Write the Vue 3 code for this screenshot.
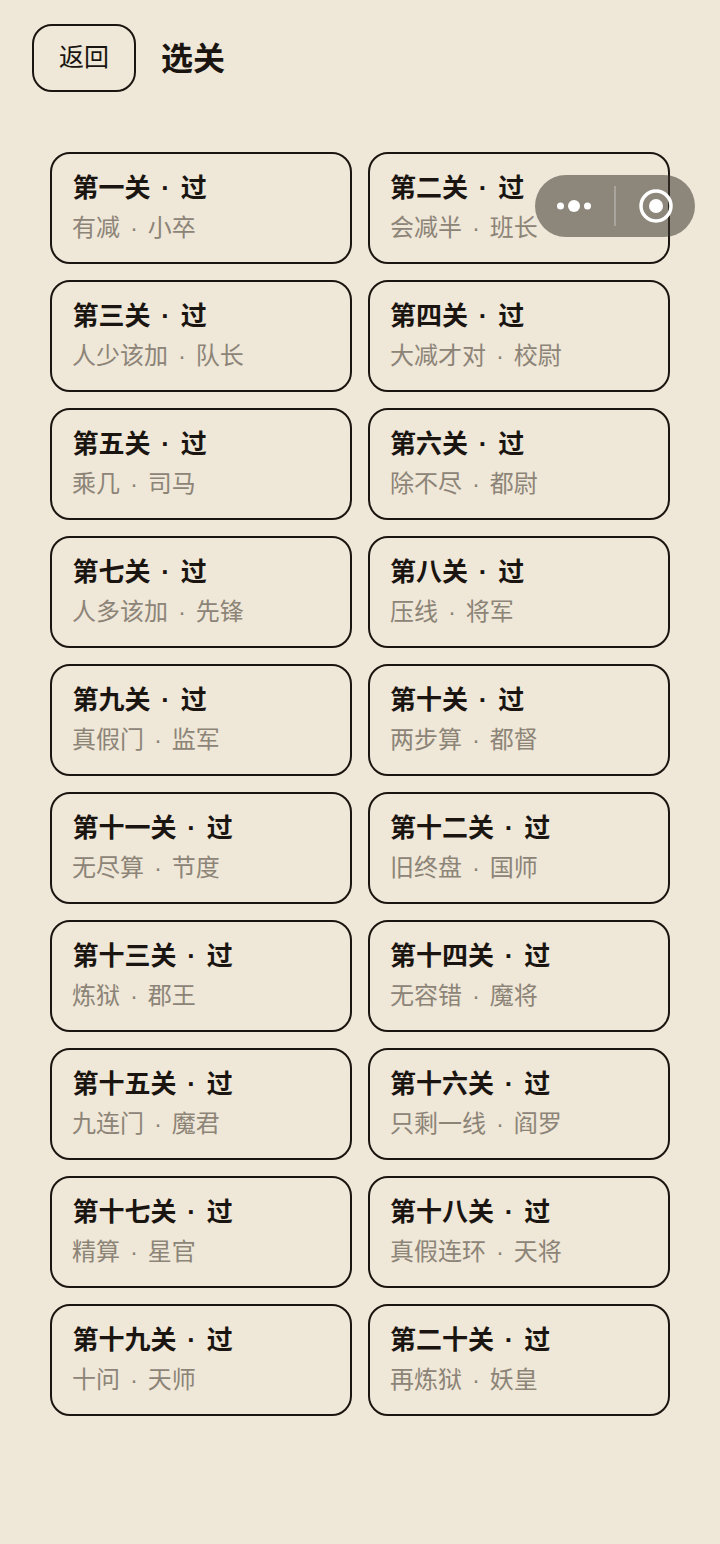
<template>
  <div class="page">
    <header class="top">
      <button class="back">返回</button>
      <h1 class="title">选关</h1>
    </header>
    <div class="grid">
      <div class="card" v-for="level in levels" :key="level[0]">
        <div class="name">{{ level[0] }}<span class="sep">·</span>过</div>
        <div class="desc">{{ level[1] }}<span class="sep">·</span>{{ level[2] }}</div>
      </div>
    </div>
    <div class="capsule">
      <svg class="dots" width="34" height="14" viewBox="0 0 34 14">
        <circle cx="3.5" cy="7" r="3.5" fill="#fff" />
        <circle cx="17" cy="7" r="6" fill="#fff" />
        <circle cx="30.5" cy="7" r="3.5" fill="#fff" />
      </svg>
      <span class="divider"></span>
      <svg class="target" width="34" height="34" viewBox="0 0 34 34">
        <circle cx="17" cy="17" r="15" fill="none" stroke="#fff" stroke-width="3.5" />
        <circle cx="17" cy="17" r="7" fill="#fff" />
      </svg>
    </div>
  </div>
</template>

<script setup>
const levels = [
  ['第一关', '有减', '小卒'],
  ['第二关', '会减半', '班长'],
  ['第三关', '人少该加', '队长'],
  ['第四关', '大减才对', '校尉'],
  ['第五关', '乘几', '司马'],
  ['第六关', '除不尽', '都尉'],
  ['第七关', '人多该加', '先锋'],
  ['第八关', '压线', '将军'],
  ['第九关', '真假门', '监军'],
  ['第十关', '两步算', '都督'],
  ['第十一关', '无尽算', '节度'],
  ['第十二关', '旧终盘', '国师'],
  ['第十三关', '炼狱', '郡王'],
  ['第十四关', '无容错', '魔将'],
  ['第十五关', '九连门', '魔君'],
  ['第十六关', '只剩一线', '阎罗'],
  ['第十七关', '精算', '星官'],
  ['第十八关', '真假连环', '天将'],
  ['第十九关', '十问', '天师'],
  ['第二十关', '再炼狱', '妖皇'],
]
</script>

<style>
html, body {
  background: #efe7d8;
}
</style>

<style scoped>
.page {
  position: relative;
  min-height: 1544px;
  box-sizing: border-box;
  padding: 24px 50px 0;
  background: #efe7d8;
  font-family: "Noto Sans CJK SC", sans-serif;
  color: #1a1510;
}

.top {
  display: flex;
  align-items: flex-start;
  gap: 25px;
  margin: 0 0 60px -18px;
  height: 68px;
}

.back {
  width: 104px;
  height: 68px;
  box-sizing: border-box;
  border: 2px solid #1a1510;
  border-radius: 20px;
  background: transparent;
  color: #1a1510;
  font-family: inherit;
  font-size: 25px;
  line-height: 58px;
  padding: 0 0 6px;
}

.title {
  margin: -3px 0 0;
  font-size: 32px;
  font-weight: 700;
  line-height: 70px;
  height: 68px;
}

.grid {
  display: grid;
  grid-template-columns: 302px 302px;
  gap: 16px;
}

.card {
  height: 112px;
  box-sizing: border-box;
  padding: 13px 20px 0;
  border: 2px solid #1a1510;
  border-radius: 20px;
}

.card:nth-child(odd) .name {
  padding-left: 0.5px;
}

.name {
  font-size: 26px;
  font-weight: 700;
  line-height: 38px;
  white-space: pre;
}

.desc {
  margin-top: 1px;
  font-size: 24px;
  line-height: 36px;
  color: #8c8477;
  white-space: pre;
}

.sep {
  display: inline-block;
  width: 1.16em;
  text-align: center;
  font-family: "Liberation Sans", sans-serif;
}

.capsule {
  position: absolute;
  left: 535px;
  top: 175px;
  width: 160px;
  height: 62px;
  display: flex;
  align-items: center;
  border-radius: 31px;
  background: rgba(60, 56, 48, 0.55);
}

.dots {
  margin-left: 22px;
}

.divider {
  width: 2px;
  height: 40px;
  margin-left: 23px;
  background: rgba(255, 255, 255, 0.25);
}

.target {
  margin-left: 23px;
}
</style>
